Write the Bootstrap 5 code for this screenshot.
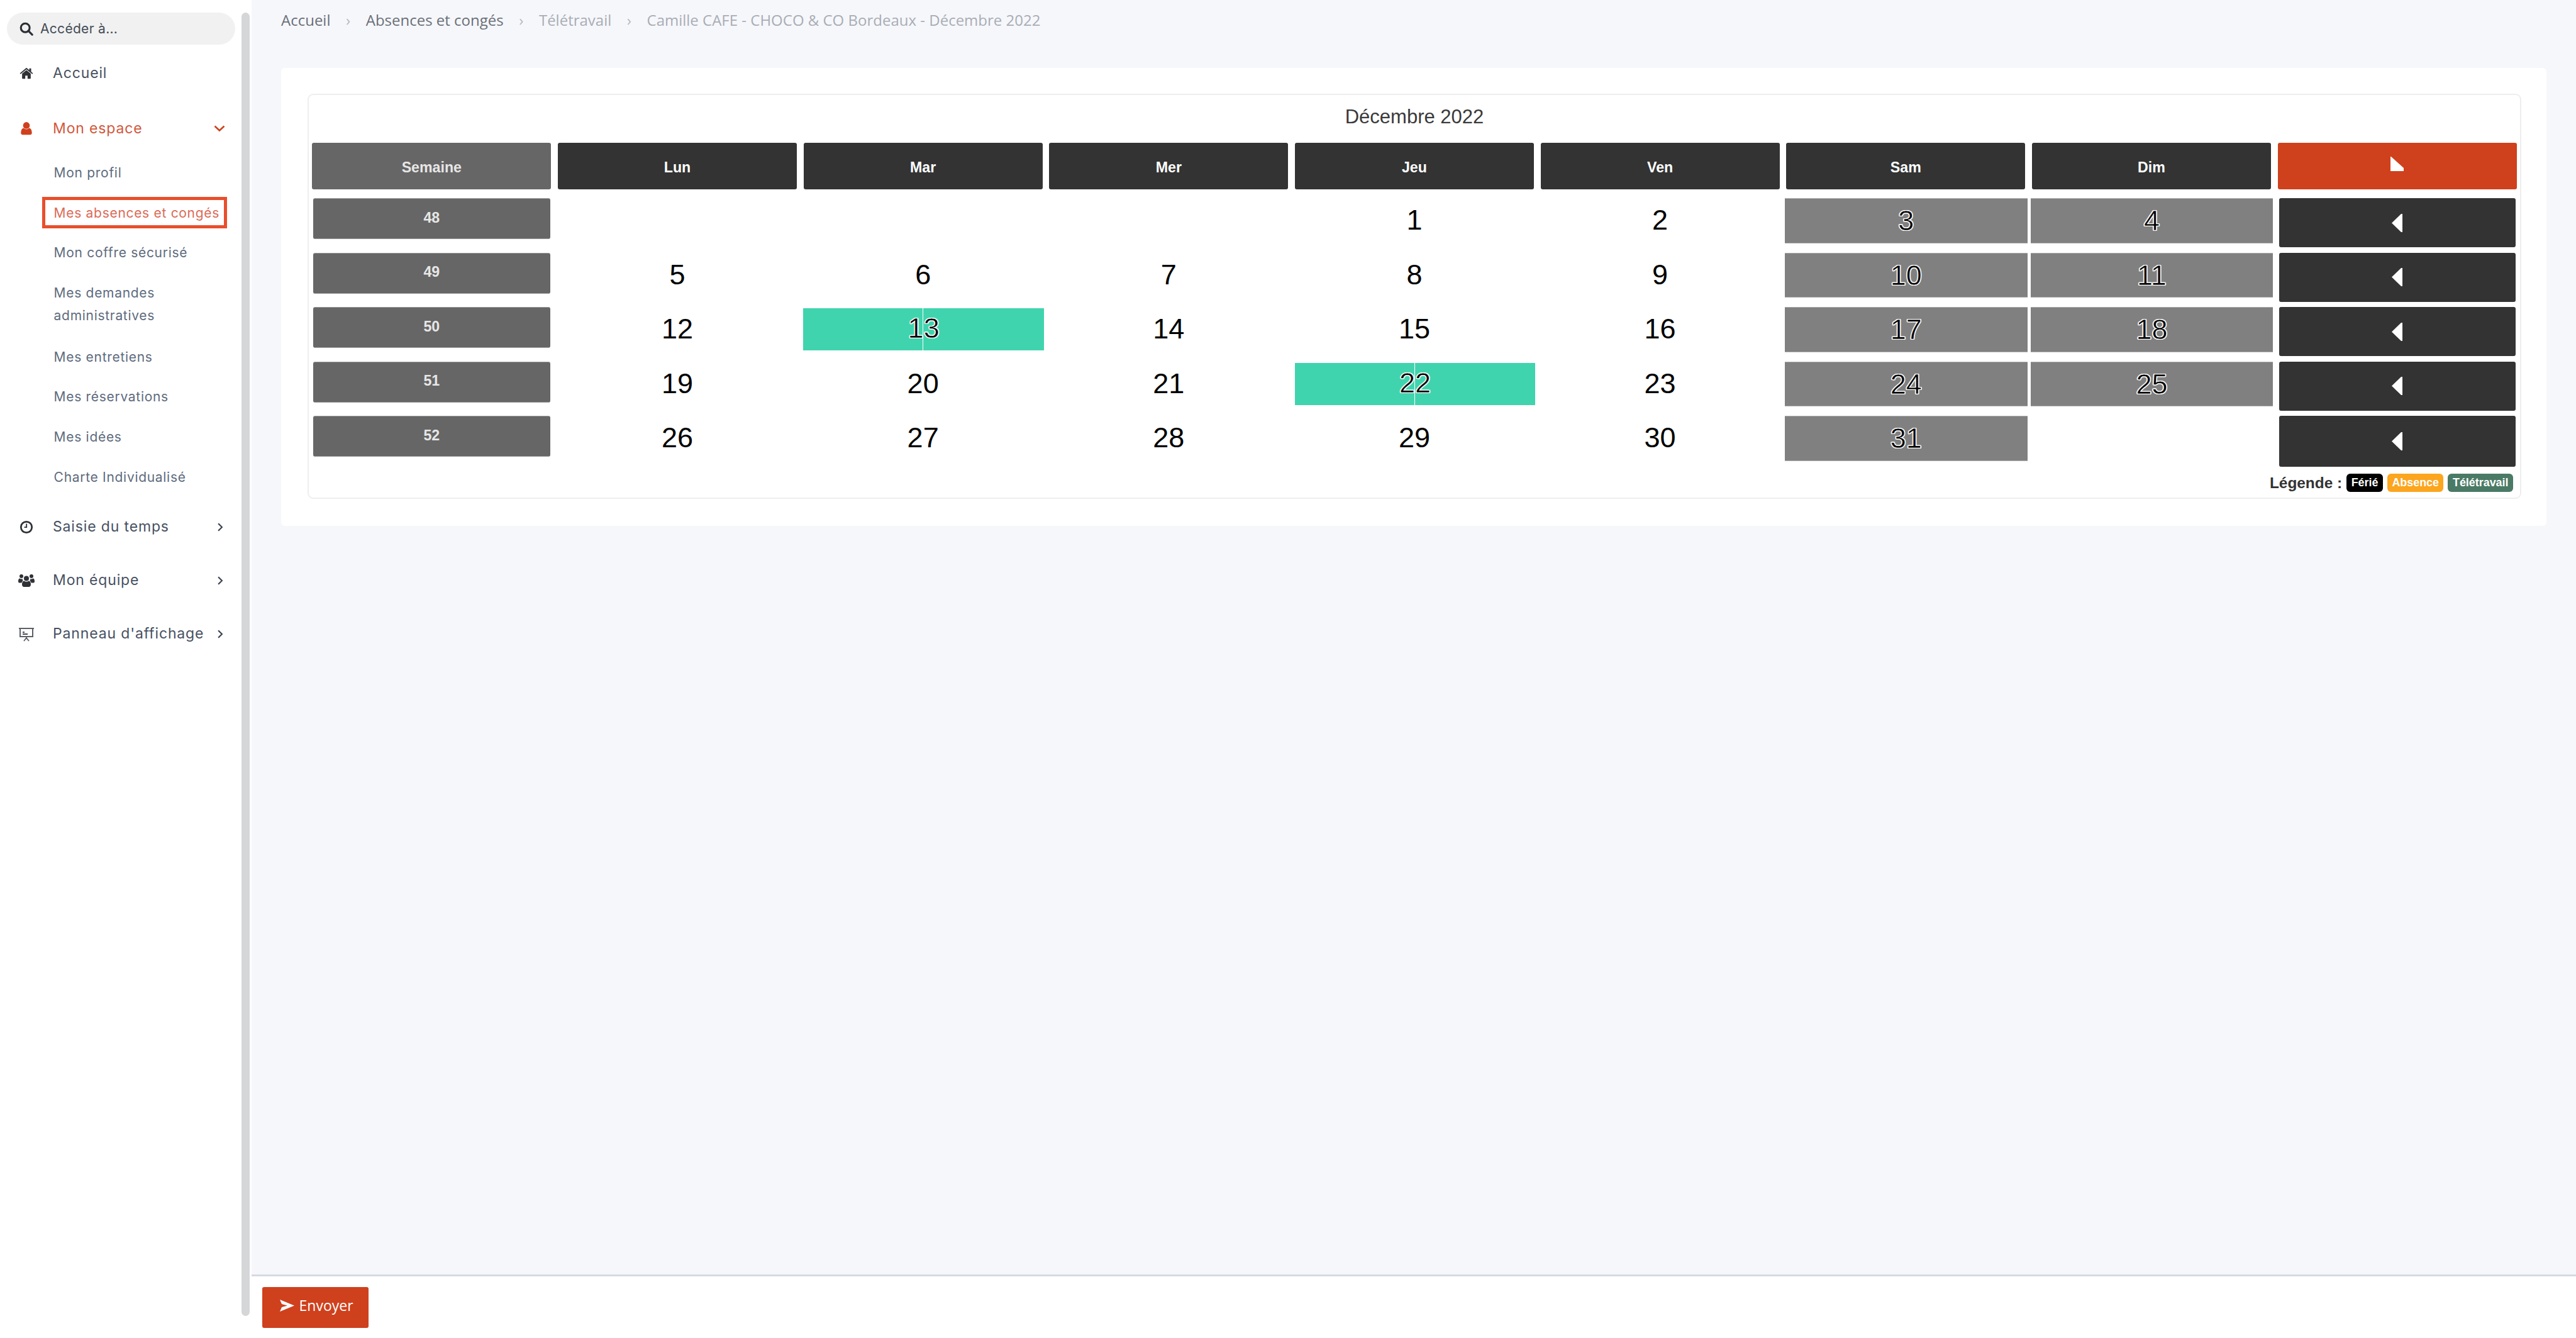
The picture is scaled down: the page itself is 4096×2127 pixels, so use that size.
<!DOCTYPE html>
<html lang="fr">
<head>
<meta charset="utf-8">
<title>Télétravail - Décembre 2022</title>
<link href="https://cdn.jsdelivr.net/npm/bootstrap@5.3.0/dist/css/bootstrap.min.css" rel="stylesheet">
<style>
html,body{height:100%;margin:0}
body{font-family:"Liberation Sans",Arial,sans-serif;background:#fff;overflow:hidden}
.shell{height:2127px}
.side-pane{width:400px;flex:none;background:#fff}
.side-nav{width:384px;flex:none;padding-top:20px;font-family:Inter,"Open Sans",sans-serif}
.side-bar{width:13px;height:2072px;margin-top:20px;background:#d5d6d8;border-radius:7px;flex:none}
.search-pill{height:51px;margin:0 10px 2.5px 11px;padding-left:20px;background:#f1f1f1;border-radius:26px;color:#444b57;font-size:21px;gap:11px;letter-spacing:.3px}
.top-item{height:85px;padding-left:31px;padding-right:29px;color:#475162;font-size:23px;font-weight:400;letter-spacing:.85px;text-decoration:none}
.top-item .ico{width:22px;height:22px;flex:none;margin-right:31px;fill:#2f3136}
.top-item .ico-wide{width:28px;height:24px;margin-left:-3px;margin-right:28px}
.top-item .chev{width:10px;height:16px;margin-left:auto;fill:none;stroke:#3c4452;stroke-width:2.6}
.top-item.is-open{height:76px;margin-top:7.5px;color:#d2583c}
.top-item.is-open .ico{fill:#d0401d}
.top-item.is-open .chev{width:18px;height:12px;stroke:#d0401d;margin-right:-3px}
.sub-link{display:block;margin:6.85px 0 6.85px 67px;width:294px;border:5px solid transparent;padding:3px 13.6px 1px;line-height:36px;font-size:21px;letter-spacing:.7px;color:#5e6b7e;text-decoration:none}
.sub-link.is-active{border-color:#e94e2c;color:#db6a57;white-space:nowrap}
.sub-link.is-wrapped{padding-bottom:3px}
.sub-link.spaced-after{margin-bottom:12.35px}
.main-pane{background:#f6f7fb;min-width:0}
.crumbs{--bs-breadcrumb-divider:"›";--bs-breadcrumb-margin-bottom:0;--bs-breadcrumb-item-padding-x:24.5px;--bs-breadcrumb-divider-color:#b5b9c0;font-family:"Open Sans",sans-serif;font-size:24px;padding:16px 0 0 47px;height:108px;line-height:32px}
.crumbs .breadcrumb-item{color:#a9adb5}
.crumbs .breadcrumb-item.is-dark{color:#6a7078}
.main-card{margin:0 47px 0 47px;border:0;border-radius:6px;background:#fff}
.main-card .card-body{padding:41px 40px 43px 42px}
.cal-card{border:2px solid #eeeeee;border-radius:9px;padding:0 0 9px}
.cal-title{height:76px;padding-bottom:6px;font-size:31px;color:#3a3a3a;text-align:center;line-height:70px}
.cal-grid{table-layout:fixed;width:100%;border-collapse:collapse}
.cal-grid td{padding:0;height:86.5px;vertical-align:top}
.cal-grid tr.head-row td{height:88.3px}
.head-cell{height:73.5px;margin:0 5.3px;background:#333;color:#fff;font-weight:700;font-size:23.2px;border-radius:3px;padding-top:6px}
.head-cell.is-week{background:#666;color:#e6e6e6}
.head-cell.is-toggle{background:#cf401d;padding:0 0 6px}
.week-cell{height:65px;margin:0 7px;padding-bottom:3px;background:#666;color:#e6e6e6;font-weight:700;font-size:23.2px;border-radius:3px;border-top:1px solid #999;border-bottom:1px solid #999}
.day-num{height:71.6px;line-height:70px;text-align:center;font-size:45px;color:#000}
.day-off{margin:0 2px 0 3px;background:#808080;-webkit-text-stroke:.5px #fff;text-shadow:-1.3px 0 0 #fff,1.3px 0 0 #fff,0 -1.3px 0 #fff,0 1.3px 0 #fff,1px 1px 0 #fff,-1px -1px 0 #fff,1px -1px 0 #fff,-1px 1px 0 #fff;border-top:1px solid #aaa;border-bottom:1px solid #aaa}
.day-remote{height:67px;line-height:64px;margin:2px 3px 0 5px;background:linear-gradient(to right,#40d4ae calc(50% - 1px),#fff calc(50% - 1px),#fff 50%,#40d4ae 50%);-webkit-text-stroke:.5px #fff;text-shadow:-1.3px 0 0 #fff,1.3px 0 0 #fff,0 -1.3px 0 #fff,0 1.3px 0 #fff,1px 1px 0 #fff,-1px -1px 0 #fff,1px -1px 0 #fff,-1px 1px 0 #fff}
.toggle-cell{height:78px;margin:0 7.4px;background:#333;border-radius:3px}
.toggle-cell.is-last{height:81px}
.legend-line{margin-top:5px;padding-right:11px;gap:7px;font-weight:700;font-size:24.4px;color:#333;line-height:29px}
.legend-tag{height:29px;padding:0 7.5px;border-radius:6px;font-size:17.9px;color:#fff;line-height:29px}
.tag-off{background:#000}.tag-absent{background:#fca51f}.tag-remote{background:#4a7a65}
.foot-bar{height:101.5px;flex:none;background:#fff;border-top:3px solid #d5dae2;padding:17px 0 0 16.6px}
.send-btn{width:169px;height:65px;padding:0 0 6px 28px;background:#cf401d;border:0;border-radius:3px;color:#fff;font-family:"Open Sans",sans-serif;font-size:23px;gap:8px}
.send-btn:hover{background:#cf401d;color:#fff}
</style>
</head>
<body>
<div class="shell d-flex">
  <aside class="side-pane d-flex">
    <nav class="side-nav">
      <div class="search-pill d-flex align-items-center">
        <svg width="22" height="22" viewBox="0 0 24 24" fill="none" stroke="#2b2f36" stroke-width="3.4"><circle cx="10" cy="10" r="7.6"/><path d="M15.5 15.5 22 22" stroke-linecap="round"/></svg>
        <span>Accéder à...</span>
      </div>
      <a class="top-item d-flex align-items-center" href="#">
        <svg class="ico" viewBox="0 0 24 24"><path d="M4.5 13.2 12 7l7.5 6.2V21a1 1 0 0 1-1 1H14v-5.5h-4V22H5.500a1 1 0 0 1-1-1z"/><path d="M.6 12.500 12 3l5 4.200V4h3.200v5.900l3.200 2.600-1.300 1.500L12 5.600 1.900 14z"/></svg>
        <span>Accueil</span>
      </a>
      <a class="top-item is-open d-flex align-items-center" href="#">
        <svg class="ico" viewBox="0 0 24 24"><circle cx="12" cy="7" r="5.800"/><path d="M2.500 20c0-5 1.800-8 5-8.500 1 1.300 2.700 2.200 4.500 2.200s3.500-.9 4.500-2.200c3.200.5 5 3.500 5 8.500 0 2-1.300 3.300-3 3.300H5.500c-1.700 0-3-1.300-3-3.300z"/></svg>
        <span>Mon espace</span>
        <svg class="chev" viewBox="0 0 18 12"><path d="M1.500 2.500 9 9.500l7.500-7"/></svg>
      </a>
      <div class="d-flex flex-column">
        <a class="sub-link" href="#">Mon profil</a>
        <a class="sub-link is-active" href="#">Mes absences et congés</a>
        <a class="sub-link" href="#">Mon coffre sécurisé</a>
        <a class="sub-link is-wrapped" href="#">Mes demandes administratives</a>
        <a class="sub-link" href="#">Mes entretiens</a>
        <a class="sub-link" href="#">Mes réservations</a>
        <a class="sub-link" href="#">Mes idées</a>
        <a class="sub-link spaced-after" href="#">Charte Individualisé</a>
      </div>
      <a class="top-item d-flex align-items-center" href="#">
        <svg class="ico" viewBox="0 0 24 24"><path fill-rule="evenodd" d="M12 1a11 11 0 1 1 0 22 11 11 0 0 1 0-22zm0 3a8 8 0 1 0 0 16 8 8 0 0 0 0-16z"/><path d="M13.200 6v7.200H8.200v-2h3V6z"/></svg>
        <span>Saisie du temps</span>
        <svg class="chev" viewBox="0 0 12 18"><path d="M2.500 2 9.500 9l-7 7"/></svg>
      </a>
      <a class="top-item d-flex align-items-center" href="#">
        <svg class="ico ico-wide" viewBox="0 0 26 24"><circle cx="13" cy="8.500" r="4"/><circle cx="5" cy="5" r="3"/><circle cx="21" cy="5" r="3"/><path d="M6 18c0-4 2-5.500 3.500-5.500 1 .8 2.200 1.200 3.500 1.200s2.500-.4 3.500-1.200C18 12.500 20 14 20 18c0 2.500-1.500 4-3 4H9c-1.500 0-3-1.500-3-4z"/><path d="M5.500 15.500H1.500C.5 15.500 0 14.500 0 13c0-3 1.200-4.500 2.500-4.500C3.300 9.200 4.200 9.500 5 9.500c.6 0 1.200-.2 1.700-.4-.2 2 .8 3 1 3.400-1.200.6-2 1.600-2.200 3zM20.500 15.500h4c1 0 1.500-1 1.500-2.500 0-3-1.200-4.500-2.500-4.500-.8.700-1.700 1-2.500 1-.6 0-1.200-.2-1.700-.4.200 2-.8 3-1 3.400 1.200.6 2 1.600 2.200 3z"/></svg>
        <span>Mon équipe</span>
        <svg class="chev" viewBox="0 0 12 18"><path d="M2.500 2 9.500 9l-7 7"/></svg>
      </a>
      <a class="top-item d-flex align-items-center" href="#">
        <svg class="ico ico-wide" viewBox="0 0 26 24"><g fill="none"><path d="M1 3h24M3 3v13h20V3" stroke="#5b6068" stroke-width="2"/><path d="M7 12h8M7 9h3" stroke="#45494f" stroke-width="2"/><path d="M13 16v3M13 18l-4 5M13 18l4 5" stroke="#5b6068" stroke-width="1.800"/></g></svg>
        <span>Panneau d'affichage</span>
        <svg class="chev" viewBox="0 0 12 18"><path d="M2.500 2 9.500 9l-7 7"/></svg>
      </a>
    </nav>
    <div class="side-bar"></div>
  </aside>
  <main class="main-pane flex-grow-1 d-flex flex-column">
    <div class="flex-grow-1">
      <ol class="breadcrumb crumbs">
        <li class="breadcrumb-item is-dark">Accueil</li>
        <li class="breadcrumb-item is-dark">Absences et congés</li>
        <li class="breadcrumb-item">Télétravail</li>
        <li class="breadcrumb-item">Camille CAFE - CHOCO &amp; CO Bordeaux - Décembre 2022</li>
      </ol>
      <div class="card main-card">
        <div class="card-body">
          <div class="card cal-card">
            <div class="cal-title">Décembre 2022</div>
            <table class="cal-grid">
              <tbody>
                <tr class="head-row">
                  <td><div class="head-cell is-week d-flex align-items-center justify-content-center">Semaine</div></td>
                  <td><div class="head-cell d-flex align-items-center justify-content-center">Lun</div></td>
                  <td><div class="head-cell d-flex align-items-center justify-content-center">Mar</div></td>
                  <td><div class="head-cell d-flex align-items-center justify-content-center">Mer</div></td>
                  <td><div class="head-cell d-flex align-items-center justify-content-center">Jeu</div></td>
                  <td><div class="head-cell d-flex align-items-center justify-content-center">Ven</div></td>
                  <td><div class="head-cell d-flex align-items-center justify-content-center">Sam</div></td>
                  <td><div class="head-cell d-flex align-items-center justify-content-center">Dim</div></td>
                  <td><div class="head-cell is-toggle d-flex align-items-center justify-content-center"><svg width="21" height="23" viewBox="0 0 21 23"><path d="M0 0h1l20 18v5H0z" fill="#fff"/></svg></div></td>
                </tr>
                <tr>
                  <td><div class="week-cell d-flex align-items-center justify-content-center">48</div></td>
                  <td></td><td></td><td></td>
                  <td><div class="day-num">1</div></td>
                  <td><div class="day-num">2</div></td>
                  <td><div class="day-num day-off">3</div></td>
                  <td><div class="day-num day-off">4</div></td>
                  <td><div class="toggle-cell d-flex align-items-center justify-content-center"><svg width="17" height="29" viewBox="0 0 17 29"><path d="M17 0v29h-2L0 14.500 15 0z" fill="#fff"/></svg></div></td>
                </tr>
                <tr>
                  <td><div class="week-cell d-flex align-items-center justify-content-center">49</div></td>
                  <td><div class="day-num">5</div></td>
                  <td><div class="day-num">6</div></td>
                  <td><div class="day-num">7</div></td>
                  <td><div class="day-num">8</div></td>
                  <td><div class="day-num">9</div></td>
                  <td><div class="day-num day-off">10</div></td>
                  <td><div class="day-num day-off">11</div></td>
                  <td><div class="toggle-cell d-flex align-items-center justify-content-center"><svg width="17" height="29" viewBox="0 0 17 29"><path d="M17 0v29h-2L0 14.500 15 0z" fill="#fff"/></svg></div></td>
                </tr>
                <tr>
                  <td><div class="week-cell d-flex align-items-center justify-content-center">50</div></td>
                  <td><div class="day-num">12</div></td>
                  <td><div class="day-num day-remote">13</div></td>
                  <td><div class="day-num">14</div></td>
                  <td><div class="day-num">15</div></td>
                  <td><div class="day-num">16</div></td>
                  <td><div class="day-num day-off">17</div></td>
                  <td><div class="day-num day-off">18</div></td>
                  <td><div class="toggle-cell d-flex align-items-center justify-content-center"><svg width="17" height="29" viewBox="0 0 17 29"><path d="M17 0v29h-2L0 14.500 15 0z" fill="#fff"/></svg></div></td>
                </tr>
                <tr>
                  <td><div class="week-cell d-flex align-items-center justify-content-center">51</div></td>
                  <td><div class="day-num">19</div></td>
                  <td><div class="day-num">20</div></td>
                  <td><div class="day-num">21</div></td>
                  <td><div class="day-num day-remote">22</div></td>
                  <td><div class="day-num">23</div></td>
                  <td><div class="day-num day-off">24</div></td>
                  <td><div class="day-num day-off">25</div></td>
                  <td><div class="toggle-cell d-flex align-items-center justify-content-center"><svg width="17" height="29" viewBox="0 0 17 29"><path d="M17 0v29h-2L0 14.500 15 0z" fill="#fff"/></svg></div></td>
                </tr>
                <tr>
                  <td><div class="week-cell d-flex align-items-center justify-content-center">52</div></td>
                  <td><div class="day-num">26</div></td>
                  <td><div class="day-num">27</div></td>
                  <td><div class="day-num">28</div></td>
                  <td><div class="day-num">29</div></td>
                  <td><div class="day-num">30</div></td>
                  <td><div class="day-num day-off">31</div></td>
                  <td></td>
                  <td><div class="toggle-cell is-last d-flex align-items-center justify-content-center"><svg width="17" height="29" viewBox="0 0 17 29"><path d="M17 0v29h-2L0 14.500 15 0z" fill="#fff"/></svg></div></td>
                </tr>
              </tbody>
            </table>
            <div class="legend-line d-flex justify-content-end align-items-center">
              <span>Légende :</span>
              <span class="legend-tag tag-off">Férié</span>
              <span class="legend-tag tag-absent">Absence</span>
              <span class="legend-tag tag-remote">Télétravail</span>
            </div>
          </div>
        </div>
      </div>
    </div>
    <footer class="foot-bar">
      <button type="button" class="btn send-btn d-inline-flex align-items-center">
        <svg width="23" height="19" viewBox="0 0 23 19"><path d="M0 0 23 9.500 0 19l3-7 9-2.500-9-2.500z" fill="#fff"/></svg>
        <span>Envoyer</span>
      </button>
    </footer>
  </main>
</div>
<script src="https://cdn.jsdelivr.net/npm/bootstrap@5.3.0/dist/js/bootstrap.bundle.min.js"></script>
</body>
</html>
